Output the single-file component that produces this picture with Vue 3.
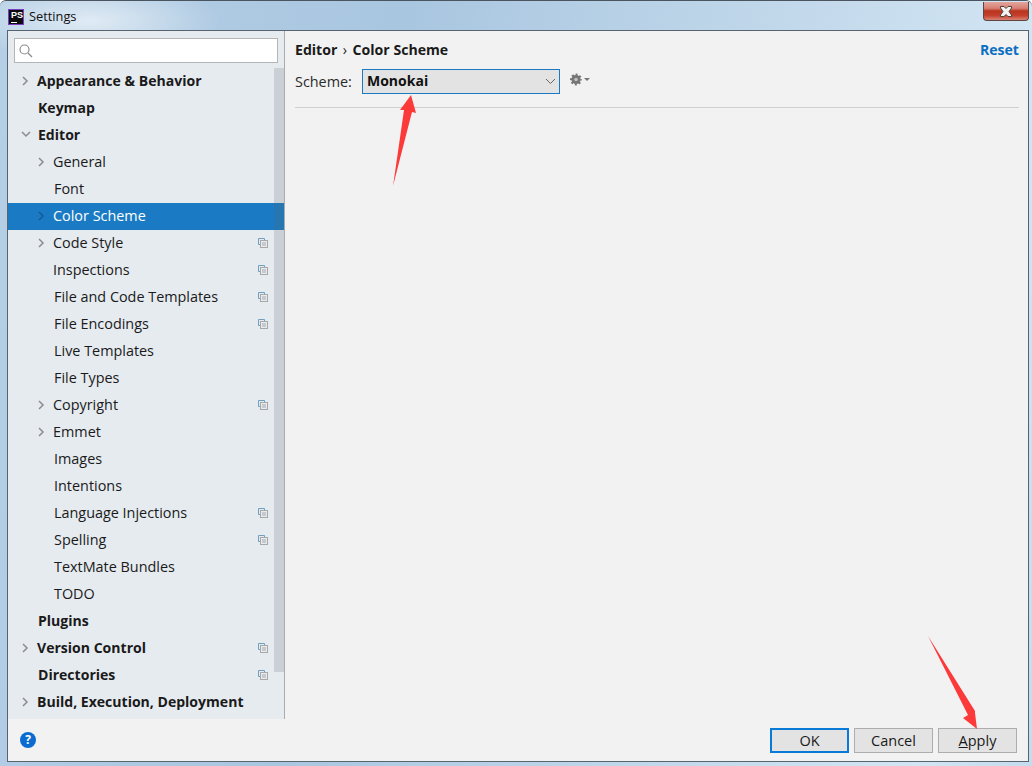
<script setup>
const items = [
  { label: 'Appearance & Behavior', level: 0, arrow: 'right', bold: true },
  { label: 'Keymap', level: 0, bold: true },
  { label: 'Editor', level: 0, arrow: 'down', bold: true },
  { label: 'General', level: 1, arrow: 'right' },
  { label: 'Font', level: 1 },
  { label: 'Color Scheme', level: 1, arrow: 'right', selected: true },
  { label: 'Code Style', level: 1, arrow: 'right', copy: true },
  { label: 'Inspections', level: 1, copy: true, tight: true },
  { label: 'File and Code Templates', level: 1, copy: true },
  { label: 'File Encodings', level: 1, copy: true },
  { label: 'Live Templates', level: 1 },
  { label: 'File Types', level: 1 },
  { label: 'Copyright', level: 1, arrow: 'right', copy: true },
  { label: 'Emmet', level: 1, arrow: 'right' },
  { label: 'Images', level: 1 },
  { label: 'Intentions', level: 1 },
  { label: 'Language Injections', level: 1, copy: true },
  { label: 'Spelling', level: 1, copy: true },
  { label: 'TextMate Bundles', level: 1 },
  { label: 'TODO', level: 1 },
  { label: 'Plugins', level: 0, bold: true },
  { label: 'Version Control', level: 0, arrow: 'right', bold: true, copy: true },
  { label: 'Directories', level: 0, bold: true, copy: true },
  { label: 'Build, Execution, Deployment', level: 0, arrow: 'right', bold: true }
]
</script>

<template>
  <div class="desktop">
    <header class="titlebar">
      <div class="app-logo"><span class="logo-text">PS</span><span class="logo-bar"></span></div>
      <span class="title">Settings</span>
      <button class="close" aria-label="Close">
        <svg width="16" height="11" viewBox="0 0 16 11">
          <path d="M2.500.500h3.500l2 2 2-2h3.500v1.500L11 5.500 13.500 9v1.500H10l-2-2-2 2H2.500V9L5 5.500 2.500 2z" fill="#f2f2f2" stroke="#50403f" stroke-width="1"/>
        </svg>
      </button>
    </header>

    <div class="dialog">
      <div class="main">
        <aside class="sidebar">
          <div class="search-wrap">
            <div class="search">
              <svg width="16" height="16" viewBox="0 0 16 16" fill="none" stroke="#8a8a8a" stroke-width="1.200">
                <circle cx="6.500" cy="6.500" r="4.500"/>
                <path d="M10 10l4 4"/>
              </svg>
            </div>
          </div>
          <div class="tree-wrap">
            <ul class="tree">
              <li
                v-for="item in items"
                :key="item.label"
                class="row"
                :class="{ selected: item.selected, bold: item.bold, child: item.level === 1, 'has-arrow': item.arrow === 'right', tight: item.tight }"
              >
                <svg v-if="item.arrow === 'right'" class="arrow" width="8" height="10" viewBox="0 0 8 10" fill="none">
                  <path d="M2 1l4 4-4 4" stroke-width="1.500"/>
                </svg>
                <svg v-else-if="item.arrow === 'down'" class="arrow" width="10" height="8" viewBox="0 0 10 8" fill="none">
                  <path d="M1 2l4 4 4-4" stroke-width="1.500"/>
                </svg>
                <span class="label">{{ item.label }}</span>
                <svg v-if="item.copy" class="copy" width="10" height="10" viewBox="0 0 10 10" fill="none">
                  <path d="M6.500 2V.500H.500V6.500H2" stroke="#6f9fc0"/>
                  <rect x="2.500" y="2.500" width="7" height="7" fill="#e6ebf0" stroke="#a8a8a8"/>
                  <path d="M4 5h4M4 7h4" stroke="#a8a8a8"/>
                </svg>
              </li>
            </ul>
            <div class="scrollbar"><div class="thumb"></div></div>
          </div>
        </aside>

        <section class="content">
          <div class="crumbs">
            <span class="crumb-path">Editor<span class="sep">›</span>Color Scheme</span>
            <a class="reset">Reset</a>
          </div>
          <div class="scheme-row">
            <label class="scheme-label">Scheme:</label>
            <div class="select">
              <span class="select-value">Monokai</span>
              <svg width="11" height="7" viewBox="0 0 11 7" fill="none" stroke="#666">
                <path d="M1 1l4.500 4.500L10 1"/>
              </svg>
            </div>
            <div class="gear">
              <svg width="20" height="14" viewBox="0 0 20 14">
                <circle cx="6" cy="6.500" r="4.600" fill="#757575"/>
                <circle cx="6" cy="6.500" r="5" fill="none" stroke="#757575" stroke-width="2" stroke-dasharray="1.960 1.967" stroke-dashoffset="1"/>
                <circle cx="6" cy="6.500" r="1.800" fill="#c2c2c2"/>
                <path d="M14 5h6l-3 3z" fill="#757575"/>
              </svg>
            </div>
          </div>
          <hr class="divider" />
        </section>
      </div>

      <footer class="footer">
        <div class="help">?</div>
        <div class="buttons">
          <button class="btn primary">OK</button>
          <button class="btn">Cancel</button>
          <button class="btn"><u>A</u>pply</button>
        </div>
      </footer>
    </div>

    <svg class="annotation" width="1032" height="766" viewBox="0 0 1032 766">
      <path d="M393 185L404 109 400 109 411 94 416 112 412 111z" fill="#fc3a3a"/>
      <path d="M928 635L975 710 975 712 977 728 963 717 968 714z" fill="#fc3a3a"/>
    </svg>
  </div>
</template>

<style>
html, body { margin: 0; padding: 0; }
</style>

<style scoped>
* { box-sizing: border-box; }
.desktop {
  position: relative;
  width: 1032px;
  height: 766px;
  overflow: hidden;
  display: flex;
  flex-direction: column;
  padding: 0 3px 4px 7px;
  border-top: 1px solid #4a5560;
  border-radius: 6px 6px 0 0;
  background:
    radial-gradient(ellipse 130px 40px at 90px 20px, rgba(255,255,255,.6), transparent),
    linear-gradient(100deg, #b5cfe6 0%, #a9c6e0 35%, #bcd4e8 60%, #d2e5f3 90%, #c4dcee 100%);
  font-family: "Open Sans", "Noto Sans", sans-serif;
  color: #1a1a1a;
}
.titlebar {
  position: relative;
  flex: none;
  height: 29px;
  display: flex;
  align-items: center;
  gap: 5px;
  padding: 0 0 0 1px;
}
.app-logo {
  width: 16px;
  height: 16px;
  background: #0c0c0c;
  border: 1px solid #7a3fc0;
  position: relative;
  margin-top: 2px;
}
.logo-text {
  position: absolute;
  left: 2px;
  top: 0;
  font: bold 9px/10px "Liberation Sans", sans-serif;
  color: #fff;
}
.logo-bar {
  position: absolute;
  left: 2px;
  bottom: 1px;
  width: 6px;
  height: 1px;
  background: #fff;
}
.title {
  font-size: 12.800px;
  color: #111;
}
.close {
  position: absolute;
  right: 0;
  top: 1px;
  width: 46px;
  height: 19px;
  padding: 0;
  border: 1px solid #5d4540;
  border-top: 0;
  border-radius: 0 0 4px 4px;
  background: linear-gradient(#e2a59e 0%, #d77f73 35%, #b9331d 50%, #c4402c 75%, #d98276 100%);
  display: flex;
  align-items: center;
  justify-content: center;
}
.dialog {
  flex: 1;
  min-height: 0;
  display: flex;
  flex-direction: column;
  background: #f2f2f2;
  border: 1px solid #57636e;
}
.main {
  flex: 1;
  min-height: 0;
  display: flex;
}
.sidebar {
  flex: none;
  width: 277px;
  display: flex;
  flex-direction: column;
  background: #e6ebf0;
  border-right: 1px solid #a9adb0;
}
.search-wrap {
  flex: none;
  height: 37px;
  padding: 7px 6px 0 6px;
}
.search {
  height: 25px;
  background: #fff;
  border: 1px solid #b5b5b5;
  display: flex;
  align-items: center;
  padding-left: 3px;
}
.tree-wrap {
  flex: 1;
  min-height: 0;
  position: relative;
}
.tree {
  list-style: none;
  margin: 0;
  padding: 0;
}
.row {
  position: relative;
  height: 27px;
  display: flex;
  align-items: center;
  padding: 0 0 2px 30px;
  font-size: 14.400px;
  white-space: nowrap;
}
.row.bold { font-size: 14.050px; font-weight: 700; }
.row.has-arrow { padding-left: 29px; }
.row.child { padding-left: 46px; }
.row.child.has-arrow,
.row.child.tight { padding-left: 45px; }
.row.selected {
  background: #1a7bc4;
  color: #fff;
}
.arrow {
  position: absolute;
  left: 13px;
  top: 8px;
  stroke: #8c8c8c;
}
.row.child .arrow { left: 29px; }
.row.selected .arrow { stroke: #125c96; }
.copy {
  position: absolute;
  left: 250px;
  top: 8px;
}
.scrollbar {
  position: absolute;
  top: 0;
  right: 0;
  bottom: 0;
  width: 10px;
  pointer-events: none;
}
.thumb {
  height: 604px;
  background: rgba(90, 100, 110, .2);
}
.content {
  flex: 1;
  min-width: 0;
  padding: 0 9px 0 10px;
}
.crumbs {
  height: 38px;
  display: flex;
  align-items: center;
  justify-content: space-between;
  font-size: 14.100px;
  font-weight: 700;
  padding-bottom: 1px;
}
.sep {
  font-weight: 400;
  margin: 0 5.500px;
}
.reset { color: #0a6fc2; }
.scheme-row {
  display: flex;
  align-items: center;
  height: 25px;
}
.scheme-label {
  font-size: 14.400px;
  width: 67px;
  color: #2a2a2a;
}
.select {
  width: 198px;
  height: 25px;
  border: 1px solid #1a7bc4;
  background: #e3e3e3;
  display: flex;
  align-items: center;
  justify-content: space-between;
  padding: 0 3px 0 4px;
  font-size: 14px;
  font-weight: 700;
  color: #111;
}
.select-value { margin-top: -2px; }
.gear {
  margin-left: 10px;
  height: 14px;
  margin-top: -10px;
}
.divider {
  margin: 13px 0 0;
  border: 0;
  border-top: 1px solid #cfcfcf;
}
.footer {
  flex: none;
  height: 42px;
  background: #f2f2f2;
  display: flex;
  align-items: center;
  justify-content: space-between;
  padding: 0 11px 0 12px;
}
.help {
  width: 16px;
  height: 16px;
  border-radius: 50%;
  background: #0a6cd0;
  color: #fff;
  font: 700 12px/16px "Open Sans", sans-serif;
  text-align: center;
}
.buttons {
  display: flex;
  gap: 5px;
}
.btn {
  width: 79px;
  height: 25px;
  padding: 0;
  border: 1px solid #adadad;
  background: #e3e3e3;
  font: 14.500px "Open Sans", sans-serif;
  color: #1a1a1a;
}
.btn.primary {
  border: 2px solid #0a7ad8;
}
.annotation {
  position: absolute;
  inset: 0;
  pointer-events: none;
}
</style>
